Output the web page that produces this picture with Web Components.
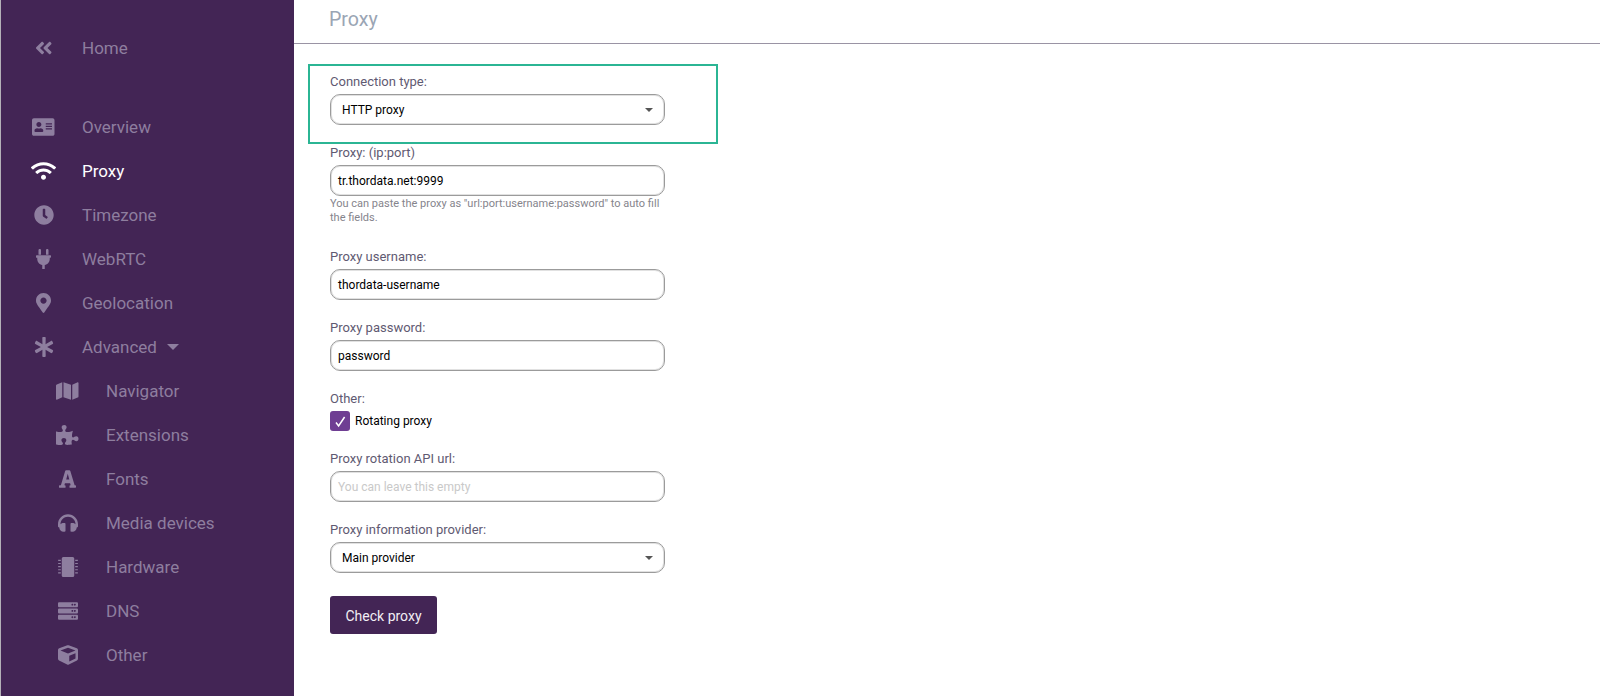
<!DOCTYPE html>
<html lang="en"><head><meta charset="utf-8"><title>Proxy</title>
<style>
html,body{margin:0;height:100%;background:#fff;overflow:hidden}
body{font-family:Roboto,"Liberation Sans",sans-serif}
</style></head>
<body>
<app-shell>
  <side-nav slot="nav">
    <nav-item icon="back" vb="448">Home</nav-item>
    <nav-spacer></nav-spacer>
    <nav-item icon="card" vb="576">Overview</nav-item>
    <nav-item icon="wifi" vb="640" active>Proxy</nav-item>
    <nav-item icon="clock" vb="512">Timezone</nav-item>
    <nav-item icon="plug" vb="384">WebRTC</nav-item>
    <nav-item icon="pin" vb="384">Geolocation</nav-item>
    <nav-item icon="star" vb="512" caret>Advanced</nav-item>
    <nav-item icon="map" vb="576" sub>Navigator</nav-item>
    <nav-item icon="puzzle" vb="576" sub>Extensions</nav-item>
    <nav-item icon="font" vb="448" sub>Fonts</nav-item>
    <nav-item icon="phones" vb="512" sub>Media devices</nav-item>
    <nav-item icon="chip" vb="512" sub>Hardware</nav-item>
    <nav-item icon="server" vb="512" sub>DNS</nav-item>
    <nav-item icon="cube" vb="512" sub>Other</nav-item>
  </side-nav>
  <page-header>Proxy</page-header>
  <highlight-box>
    <form-field flush label="Connection type:"><field-box select>HTTP proxy</field-box></form-field>
  </highlight-box>
  <form-stack>
    <form-field label="Proxy: (ip:port)" help="You can paste the proxy as &quot;url:port:username:password&quot; to auto fill the fields."><field-box>tr.thordata.net:9999</field-box></form-field>
    <form-field label="Proxy username:"><field-box>thordata-username</field-box></form-field>
    <form-field label="Proxy password:"><field-box>password</field-box></form-field>
    <form-field label="Other:"><check-box>Rotating proxy</check-box></form-field>
    <form-field label="Proxy rotation API url:"><field-box placeholder>You can leave this empty</field-box></form-field>
    <form-field label="Proxy information provider:"><field-box select>Main provider</field-box></form-field>
    <action-button>Check proxy</action-button>
  </form-stack>
</app-shell>
<script>
const ICONS={
back:'M223.7 239l136-136c9.4-9.4 24.6-9.4 33.9 0l22.6 22.6c9.4 9.4 9.4 24.6 0 33.9L319.9 256l96.4 96.4c9.4 9.4 9.4 24.6 0 33.9L393.7 409c-9.4 9.4-24.6 9.4-33.9 0l-136-136c-9.5-9.4-9.5-24.6-.1-34zm-192 34l136 136c9.4 9.4 24.6 9.4 33.9 0l22.6-22.6c9.4-9.4 9.4-24.6 0-33.9L127.9 256l96.4-96.4c9.4-9.4 9.4-24.6 0-33.9L201.7 103c-9.4-9.4-24.6-9.4-33.9 0l-136 136c-9.5 9.4-9.5 24.6-.1 34z',
card:'M528 32H48C21.5 32 0 53.5 0 80v352c0 26.5 21.5 48 48 48h480c26.5 0 48-21.5 48-48V80c0-26.5-21.5-48-48-48zm-352 96c35.3 0 64 28.7 64 64s-28.7 64-64 64-64-28.7-64-64 28.7-64 64-64zm112 236.8c0 10.6-10 19.2-22.4 19.2H86.4C74 384 64 375.4 64 364.8v-19.2c0-31.8 30.1-57.6 67.2-57.6h5c12.3 5.1 25.7 8 39.8 8s27.6-2.9 39.8-8h5c37.1 0 67.2 25.8 67.2 57.6v19.2zM512 312c0 4.4-3.6 8-8 8H360c-4.4 0-8-3.6-8-8v-16c0-4.4 3.6-8 8-8h144c4.4 0 8 3.6 8 8v16zm0-64c0 4.4-3.6 8-8 8H360c-4.4 0-8-3.6-8-8v-16c0-4.4 3.6-8 8-8h144c4.4 0 8 3.6 8 8v16zm0-64c0 4.4-3.6 8-8 8H360c-4.4 0-8-3.6-8-8v-16c0-4.4 3.6-8 8-8h144c4.4 0 8 3.6 8 8v16z',
wifi:'M634.91 154.88C457.74-8.99 182.19-8.93 5.09 154.88c-6.66 6.16-6.79 16.59-.35 22.98l34.24 33.97c6.14 6.1 16.02 6.23 22.4.38 145.92-133.68 371.3-133.71 517.25 0 6.38 5.85 16.26 5.71 22.4-.38l34.24-33.97c6.43-6.39 6.3-16.82-.36-22.98zM320 352c-35.35 0-64 28.65-64 64s28.65 64 64 64 64-28.65 64-64-28.65-64-64-64zm202.67-83.59c-115.26-101.93-290.21-101.82-405.34 0-6.9 6.1-7.12 16.69-.57 23.15l34.44 33.99c6 5.92 15.66 6.32 22.05.8 83.95-72.57 209.74-72.41 293.49 0 6.39 5.52 16.05 5.13 22.05-.8l34.44-33.99c6.56-6.46 6.33-17.06-.56-23.15z',
clock:'M256,8C119,8,8,119,8,256S119,504,256,504,504,393,504,256,393,8,256,8Zm92.49,313h0l-20,25a16,16,0,0,1-22.49,2.5h0l-67-49.72a40,40,0,0,1-15-31.23V112a16,16,0,0,1,16-16h32a16,16,0,0,1,16,16V256l58,42.5A16,16,0,0,1,348.49,321Z',
plug:'M256 144V32c0-17.673 14.327-32 32-32s32 14.327 32 32v112h-64zm112 16H16c-8.837 0-16 7.163-16 16v32c0 8.837 7.163 16 16 16h16v32c0 77.406 54.969 141.971 128 156.796V512h64v-99.204c73.031-14.825 128-79.39 128-156.796v-32h16c8.837 0 16-7.163 16-16v-32c0-8.837-7.163-16-16-16zM128 144V32c0-17.673-14.327-32-32-32S64 14.327 64 32v112h64z',
pin:'M172.268 501.67C26.97 291.031 0 262.409 0 192 0 85.961 85.961 0 192 0s192 85.961 192 192c0 70.409-26.97 99.031-172.268 309.67-9.535 13.774-29.93 13.773-39.464 0zM192 272c44.183 0 80-35.817 80-80s-35.817-80-80-80-80 35.817-80 80 35.817 80 80 80z',
star:'M478.21 334.093L336 256l142.21-78.093c11.795-6.477 15.961-21.384 9.232-33.037l-19.48-33.741c-6.728-11.653-21.72-15.499-33.227-8.523L296 186.718l3.475-162.204C299.763 11.061 288.937 0 275.48 0h-38.96c-13.456 0-24.283 11.061-23.994 24.514L216 186.718 77.265 102.607c-11.506-6.976-26.499-3.13-33.227 8.523l-19.48 33.741c-6.728 11.653-2.562 26.56 9.233 33.037L176 256 33.79 334.093c-11.795 6.477-15.961 21.384-9.232 33.037l19.48 33.741c6.728 11.653 21.721 15.499 33.227 8.523L216 325.282l-3.475 162.204C212.237 500.939 223.064 512 236.52 512h38.961c13.456 0 24.283-11.061 23.995-24.514L296 325.282l138.735 84.111c11.506 6.976 26.499 3.13 33.227-8.523l19.48-33.741c6.728-11.653 2.563-26.559-9.232-33.036z',
map:'M0 117.66v346.32c0 11.32 11.43 19.06 21.94 14.86L160 416V32L20.12 87.95A32.006 32.006 0 0 0 0 117.66zM192 416l192 64V96L192 32v384zM554.06 33.16L416 96v384l139.88-55.95A31.996 31.996 0 0 0 576 394.34V48.02c0-11.32-11.43-19.06-21.94-14.86z',
puzzle:'M519.442 288.651c-41.519 0-59.5 31.593-82.058 31.593C377.409 320.244 432 144 432 144s-196.288 80-196.288-3.297c0-35.827 36.288-46.25 36.288-85.985C272 19.216 243.885 0 210.539 0c-34.654 0-66.366 18.891-66.366 56.346 0 41.364 31.711 59.277 31.711 81.75C175.885 207.719 0 166.758 0 166.758v333.237s178.635 41.047 178.635-28.662c0-22.473-40-40.107-40-81.471 0-37.456 29.25-56.346 63.577-56.346 33.673 0 61.788 19.216 61.788 54.717 0 39.735-36.288 50.158-36.288 85.985 0 60.803 129.675 25.73 181.23 25.73 0 0-34.725-120.101 25.827-120.101 35.962 0 46.423 36.152 86.308 36.152C556.712 416 576 387.99 576 354.443c0-34.199-18.962-65.792-56.558-65.792z',
font:'M432 416h-32L290 50a26 26 0 0 0-25-18h-82a26 26 0 0 0-25 18L48 416H16a16 16 0 0 0-16 16v32a16 16 0 0 0 16 16h136a16 16 0 0 0 16-16v-32a16 16 0 0 0-16-16h-14l14-52h132l14 52h-14a16 16 0 0 0-16 16v32a16 16 0 0 0 16 16h136a16 16 0 0 0 16-16v-32a16 16 0 0 0-16-16zM184 268l40-148 40 148z',
phones:'M256 32C114.52 32 0 146.496 0 288v48a32 32 0 0 0 17.689 28.622l14.383 7.191C34.083 431.903 83.421 480 144 480h24c13.255 0 24-10.745 24-24V280c0-13.255-10.745-24-24-24h-24c-31.342 0-59.671 12.879-80 33.627V288c0-105.869 86.131-192 192-192s192 86.131 192 192v1.627C427.671 268.879 399.342 256 368 256h-24c-13.255 0-24 10.745-24 24v176c0 13.255 10.745 24 24 24h24c60.579 0 109.917-48.098 111.928-108.187l14.382-7.191A32 32 0 0 0 512 336v-48c0-141.479-114.496-256-256-256z',
chip:'M136 0h240a40 40 0 0 1 40 40v432a40 40 0 0 1-40 40H136a40 40 0 0 1-40-40V40a40 40 0 0 1 40-40zM4 72h68v28H4zM4 152h68v28H4zM4 232h68v28H4zM4 312h68v28H4zM4 392h68v28H4zM440 72h68v28h-68zM440 152h68v28h-68zM440 232h68v28h-68zM440 312h68v28h-68zM440 392h68v28h-68z',
server:'M480 160H32c-17.673 0-32-14.327-32-32V64c0-17.673 14.327-32 32-32h448c17.673 0 32 14.327 32 32v64c0 17.673-14.327 32-32 32zm-48-88c-13.255 0-24 10.745-24 24s10.745 24 24 24 24-10.745 24-24-10.745-24-24-24zm-64 0c-13.255 0-24 10.745-24 24s10.745 24 24 24 24-10.745 24-24-10.745-24-24-24zm112 248H32c-17.673 0-32-14.327-32-32v-64c0-17.673 14.327-32 32-32h448c17.673 0 32 14.327 32 32v64c0 17.673-14.327 32-32 32zm-48-88c-13.255 0-24 10.745-24 24s10.745 24 24 24 24-10.745 24-24-10.745-24-24-24zm-64 0c-13.255 0-24 10.745-24 24s10.745 24 24 24 24-10.745 24-24-10.745-24-24-24zm112 248H32c-17.673 0-32-14.327-32-32v-64c0-17.673 14.327-32 32-32h448c17.673 0 32 14.327 32 32v64c0 17.673-14.327 32-32 32zm-48-88c-13.255 0-24 10.745-24 24s10.745 24 24 24 24-10.745 24-24-10.745-24-24-24zm-64 0c-13.255 0-24 10.745-24 24s10.745 24 24 24 24-10.745 24-24-10.745-24-24-24z',
cube:'M239.1 6.3l-208 78c-18.7 7-31.1 25-31.1 45v225.1c0 18.2 10.3 34.8 26.5 42.9l208 104c13.5 6.8 29.4 6.8 42.9 0l208-104c16.3-8.1 26.5-24.8 26.5-42.9V129.3c0-20-12.4-37.9-31.1-44.9l-208-78C262 2.2 250 2.2 239.1 6.3zM256 68.4l192 72v1.1l-192 78-192-78v-1.1l192-72zm32 356V275.5l160-65v133.9l-160 80z'
};
function def(name,css,html){
  customElements.define(name,class extends HTMLElement{
    constructor(){super();this.attachShadow({mode:'open'});}
    connectedCallback(){
      this.shadowRoot.innerHTML='<style>'+css+'</style>'+(typeof html==='function'?html(this):html);
    }
  });
}
def('app-shell',
 `:host{display:grid;grid-template-columns:293px 1fr;grid-template-rows:44px auto 1fr;height:696px;border-left:1px solid #b4b1b8;box-sizing:border-box;color:#000}
  ::slotted([slot=nav]){grid-row:1/4}`,
 `<slot name="nav"></slot><slot></slot>`);
def('side-nav',
 `:host{display:flex;flex-direction:column;background:#432555;padding-top:26px;box-sizing:border-box;height:696px;overflow:hidden}`,
 `<slot></slot>`);
def('nav-spacer',`:host{display:block;height:35px}`,``);
def('nav-item',
 `:host{display:flex;align-items:center;height:44px;flex:none;color:#8e7e9f;font:17px Roboto,sans-serif;padding-left:30px}
  :host([sub]){padding-left:54px}
  :host([active]){color:#fff}
  .i{width:25px;height:20px;display:flex;justify-content:center;margin-right:26px;flex:none}
  svg{height:20px;display:block;fill:currentColor}
  .c{width:0;height:0;border:6px solid transparent;border-top:6px solid currentColor;border-bottom:0;margin-left:10px}`,
 h=>`<span class="i"><svg viewBox="0 0 ${h.getAttribute('vb')} 512" width="${h.getAttribute('vb')/512*20}"><path fill-rule="evenodd" d="${ICONS[h.getAttribute('icon')]}"/></svg></span><slot></slot>${h.hasAttribute('caret')?'<span class="c"></span>':''}`);
def('page-header',
 `:host{display:block;box-sizing:border-box;height:44px;border-bottom:1px solid #9a94a4;padding:8px 0 0 35px;font:19.6px/23px Roboto,sans-serif;color:#9aa5b4}`,
 `<slot></slot>`);
def('highlight-box',
 `:host{display:block;box-sizing:border-box;width:410px;height:80px;margin:20px 0 0 14px;border:2px solid #2bb594;padding:7px 20px 17px}`,
 `<slot></slot>`);
def('form-stack',`:host{display:block;padding-left:36px;width:335px}`,`<slot></slot>`);
def('form-field',
 `:host{display:block;margin-bottom:19px;width:335px}
  :host([flush]){margin-bottom:0}
  .l{font:13px/16px Roboto,sans-serif;color:#5f5a72;padding-top:1px;margin-bottom:4px}
  .h{font:11px/14px Roboto,sans-serif;color:#85848c;padding-top:1px}
  :host([help]){margin-bottom:23px}`,
 h=>`<div class="l">${h.getAttribute('label')}</div><slot></slot>${h.hasAttribute('help')?`<div class="h">${h.getAttribute('help').replace(/"/g,'&quot;')}</div>`:''}`);
def('field-box',
 `:host{display:flex;align-items:center;justify-content:space-between;box-sizing:border-box;height:31px;border:1px solid #9b9b9b;box-shadow:inset 0 0 0 1px rgba(155,155,155,.3);border-radius:10px;padding:0 7px;font:12px Roboto,sans-serif;color:#000;background:#fff}
  :host([select]){padding:0 11px 0 11px}
  :host([placeholder]){color:#c9c9c9}
  .c{width:0;height:0;border:4.5px solid transparent;border-top:4.5px solid #555;border-bottom:0}`,
 h=>`<span><slot></slot></span>${h.hasAttribute('select')?'<span class="c"></span>':''}`);
def('check-box',
 `:host{display:flex;align-items:center;gap:5px;height:20px;font:12px Roboto,sans-serif;color:#000}
  .b{width:20px;height:20px;border-radius:3px;background:#6f3e93;display:flex;align-items:center;justify-content:center}`,
 `<span class="b"><svg width="20" height="20" viewBox="0 0 20 20"><path d="M6 11.5l2.6 3.5 6-9" fill="none" stroke="#fff" stroke-width="1.5"/></svg></span><span><slot></slot></span>`);
def('action-button',
 `:host{display:flex;align-items:center;justify-content:center;box-sizing:border-box;width:107px;height:38px;margin-top:23px;padding-top:1px;background:#432555;color:#f1eef4;border-radius:3px;font:14px Roboto,sans-serif}`,
 `<slot></slot>`);
</script>
</body></html>
